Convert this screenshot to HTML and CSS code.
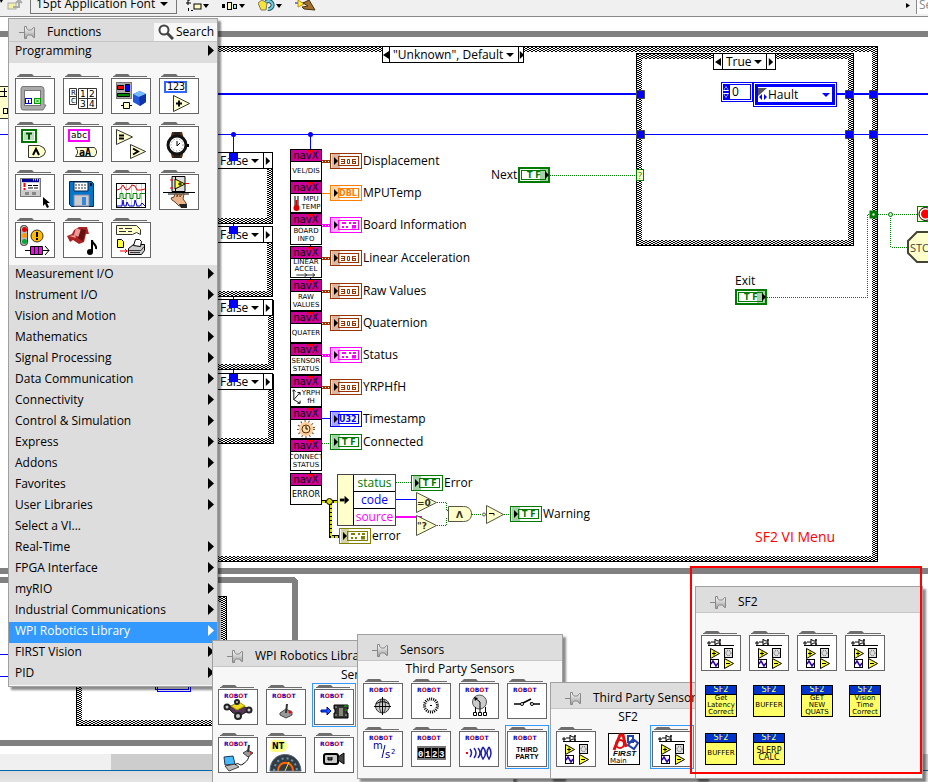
FILE: index.html
```html
<!DOCTYPE html>
<html lang="en">
<head>
<meta charset="utf-8">
<title>Block Diagram</title>
<link rel="stylesheet" href="styles.css">
</head>
<body>
<svg class="defs" aria-hidden="true">
  <defs>
    <pattern id="weave" width="4" height="2" patternUnits="userSpaceOnUse">
      <rect width="4" height="2" fill="#fff"/>
      <path d="M1 0h2v1h-2zM0 1h1v1h-1zM3 1h1v1h-1z" fill="#000"/>
    </pattern>
    <linearGradient id="metal" x1="0" y1="0" x2="0" y2="1"><stop offset="0" stop-color="#fff"/><stop offset="1" stop-color="#999"/></linearGradient>
  </defs>
  <symbol id="folder" viewBox="0 0 40 40"><path d="M3 2l2-2h12l2 2h17v1H2V2z" fill="#6e6e6e"/><rect x=".5" y="4.5" width="39" height="35" fill="#fff" stroke="#666"/></symbol>
  <symbol id="pin" viewBox="0 0 16 14"><path d="M0 7.500h6" stroke="#888"/><path d="M5.500 1.500l2 0 0 2 2 1.500h3l2-2.500h1v10h-1l-2-2.500h-3l-2 1.500v2h-2z" fill="url(#metal)" stroke="#888"/></symbol>
  <symbol id="right" viewBox="0 0 6 11"><path d="M0 0l6 5.500-6 5.500z" fill="currentColor"/></symbol>
  <symbol id="left" viewBox="0 0 6 8"><path d="M6 0v8L0 4z" fill="currentColor"/></symbol>
  <symbol id="down" viewBox="0 0 8 4"><path d="M0 0h8L4 4z" fill="currentColor"/></symbol>
  <symbol id="indicator" viewBox="0 0 32 16"><rect x=".5" y=".5" width="31" height="15" fill="#fff" stroke="currentColor"/><rect x="8.500" y="3.500" width="20" height="9" fill="none" stroke="currentColor"/><rect x="2" y="1" width="8" height="14" fill="currentColor" opacity=".35"/><path d="M4 4l4 4-4 4z"/></symbol>
  <symbol id="control" viewBox="0 0 32 16"><rect x="1" y="1" width="30" height="14" fill="#fff" stroke="currentColor" stroke-width="2"/><rect x="3.500" y="3.500" width="24" height="9" fill="none" stroke="currentColor"/><rect x="22" y="2" width="9" height="12" fill="currentColor" opacity=".35"/><path d="M27 4l4 4-4 4z"/></symbol>
  <symbol id="cluster" viewBox="0 0 32 16"><use href="#indicator"/><path d="M11 6.500h4M14.500 6v5M11 8.500h4M11 10.500h4M17.500 6.500h2v4h-2zM22 6.500h4M22.500 6v5M22 10.500h4M25.500 8v3M23 8.500h3" fill="none" stroke="currentColor"/></symbol>
  <symbol id="mixed" viewBox="0 0 32 16"><use href="#indicator"/><path d="M12 6h4M19 6h2M23 6h3M12 10h2M16 10h2M22 9h3v1.500h-3" fill="none" stroke="currentColor" stroke-width="2"/></symbol>
  <symbol id="tf" viewBox="0 0 32 16"><use href="#indicator"/><text x="12" y="11" class="px8" fill="currentColor">T F</text></symbol>
  <symbol id="tfc" viewBox="0 0 32 16"><use href="#control"/><text x="9" y="11" class="px8" fill="currentColor">T F</text></symbol>
  <symbol id="robot" viewBox="0 0 40 40"><use href="#folder"/><text x="6" y="13" class="px7" fill="#00c">R<tspan fill="#d00">O</tspan>B<tspan fill="#d00">O</tspan>T</text></symbol>
  <symbol id="vis" viewBox="0 0 40 40"><use href="#folder"/><path d="M7 11h2v2H7zM10 11h4M14 8v6M14 8.500l3 1.500h2v-2v6v-2h-2l-3 1.500M7 14.500h26" fill="none" stroke="#000"/><path d="M9.500 17.500v10l9-5zM23.500 27.500v10l9-5z" fill="#ff3" stroke="#000"/><path d="M11 22.500h4M13 20.500v4M25 32.500h4" stroke="#000"/><rect x="23.500" y="17.500" width="8" height="9" fill="#ddd" stroke="#000"/><circle cx="27.500" cy="22" r="2.500" fill="none" stroke="#555" stroke-dasharray="1 1"/><rect x="9.500" y="28.500" width="8" height="8" fill="#fff" stroke="#000"/><path d="M10 33l2-3 3 5 2-3" stroke="#30a" fill="none" stroke-width="1.500"/></symbol>
</svg>

<header class="toolbar">
  <svg class="tool-step" viewBox="0 0 24 16" aria-hidden="true"><path d="M0 0l3 0-2 3z"/><rect x="8" y="3" width="8" height="6" fill="#f5f0a8" stroke="#aaa"/><path d="M13 7h6V1m-3 2l3-3 3 3" fill="none" stroke="#aaa" stroke-width="2"/></svg>
  <label class="font-box"><select aria-label="Text settings"><option>15pt Application Font</option></select><svg class="caret" viewBox="0 0 8 4"><use href="#down"/></svg></label>
  <button class="tool" aria-label="Align objects"><svg viewBox="0 0 24 16"><path d="M2 0v5M0 3h5M2.500 8v3M5 10.500h2M2 0h2" stroke="#000"/><rect x="8" y="4" width="7" height="5" fill="#fffbc0" stroke="#000"/><path d="M17 4h6l-3 4z"/></svg></button>
  <button class="tool" aria-label="Distribute objects"><svg viewBox="0 0 24 16"><path d="M0 4h3v4H0z"/><rect x="5.500" y="2.500" width="4" height="7" fill="#fffbc0" stroke="#000"/><rect x="11.500" y="4.500" width="3" height="4" fill="#9ee" stroke="#000"/><path d="M17 4h6l-3 4z"/></svg></button>
  <button class="tool" aria-label="Reorder"><svg viewBox="0 0 24 16"><path d="M0 3l4-3 5 3-1 7-5 0z" fill="#f3e43c" stroke="#875"/><path d="M8 2a4 4 0 1 1 2 7" fill="none" stroke="#256" stroke-width="4"/><path d="M8 2a4 4 0 1 1 2 7" fill="none" stroke="#7cd" stroke-width="2"/><path d="M18 4h6l-3 4z"/></svg></button>
  <button class="tool" aria-label="Clean up diagram"><svg viewBox="0 0 24 16"><path d="M1 3h12" stroke="#00c"/><path d="M4 0v7l6-3z" fill="#ff3" stroke="#c80"/><path d="M9 3l6-3 6 10-11-1-2-2 6-1z" fill="#a6702c" stroke="#431"/></svg></button>
  <svg class="tool-end" viewBox="0 0 12 16" aria-hidden="true"><path d="M2 3v5l4-2.500z"/></svg>
  <input class="finder" type="text" value="Search" aria-label="Search diagram">
</header>

<main class="diagram">
  <svg class="wires" shape-rendering="crispEdges" aria-hidden="true">
    <g fill="#808080">
      <rect y="31" width="3000" height="6"/><rect y="568" width="3000" height="6"/><rect y="740" width="690" height="6"/>
      <path d="M0 577h294l4 4v160h-6V583H0z"/>
    </g>
    <g fill="none" stroke="url(#weave)" stroke-width="5">
      <rect x="60.500" y="49.500" width="814" height="509"/>
      <rect x="639.500" y="56.500" width="211" height="186"/>
      <rect x="200.500" y="158.500" width="69" height="62"/><rect x="200.500" y="230.500" width="69" height="63"/>
      <rect x="200.500" y="303.500" width="70" height="63"/><rect x="200.500" y="377.500" width="70" height="63"/>
      <rect x="79.500" y="599.500" width="144" height="123"/>
    </g>
    <g fill="none" stroke="#000">
      <rect x="57.500" y="46.500" width="820" height="515"/>
      <rect x="636.500" y="53.500" width="217" height="192"/>
      <rect x="197.500" y="155.500" width="75" height="68"/><rect x="197.500" y="227.500" width="75" height="69"/>
      <rect x="197.500" y="300.500" width="76" height="69"/><rect x="197.500" y="374.500" width="76" height="69"/>
      <rect x="76.500" y="596.500" width="150" height="129"/>
    </g>
    <rect x="-2" y="86.500" width="14" height="32" fill="#ffc" stroke="#333"/><path d="M0 91h7M0 96h7M4 88v9M3 108v5h4v-5z" fill="none" stroke="#000"/>
    <g fill="none" stroke="#00f">
      <path d="M0 134.500h3000M0 654.500h10M0 676.500h10M233.500 134v18M233.500 223v4M233.500 297v4M233.500 370v4M310.500 134v340M322 418.500h9M396 499.500h20"/>
      <path d="M218 94h418M836 94h2200" stroke-width="2"/>
      <rect x="155.500" y="680.500" width="33" height="9"/><rect x="157.500" y="682.500" width="33" height="9"/>
    </g>
    <g fill="none" stroke-width="3">
      <path d="M322 161.500h9M322 258.500h9M322 291.500h9M322 323.500h9M322 387.500h9" stroke="#930"/>
      <path d="M322 225.500h9M322 355.500h9" stroke="#f0f"/>
      <g stroke="#fff" stroke-width="1" stroke-dasharray="1 2"><path d="M322 161.500h9M322 258.500h9M322 291.500h9M322 323.500h9M322 387.500h9M322 225.500h9M322 355.500h9"/></g>
      <path d="M322 193.500h9" stroke="#ff8000" stroke-width="1"/>
      <path d="M322 501.500h15M330.500 501v35.500h9" stroke="#000"/><path d="M322 501.500h15M330.500 501v35.500h9" stroke="#dd0" stroke-width="2" stroke-dasharray="3 1"/>
      <path d="M396 516.500h26" stroke="#f0f" stroke-width="2"/><path d="M396 515.500h26" stroke="#fff" stroke-width="1" stroke-dasharray="1 3"/>
    </g>
    <g fill="none" stroke="#007a00" stroke-dasharray="1 1">
      <path d="M322 443.500h9M396 482.500h15M437 502.500h9.500v8h2M437 525.500h9.500v-7h2M472 514.500h10M504 514.500h6M550 175.500h86M767 297.500h100.500V214.500h50M890.500 214v33h17"/>
    </g>
  </svg>

  <!-- Case selectors -->
  <div class="selector s-main"><button aria-label="Previous case"><svg class="la"><use href="#left"/></svg></button><label><select aria-label="Main case"><option>"Unknown", Default</option></select><svg class="caret"><use href="#down"/></svg></label><button aria-label="Next case"><svg class="ra"><use href="#right"/></svg></button></div>
  <div class="selector s-true"><button aria-label="Previous case"><svg class="la"><use href="#left"/></svg></button><label><select aria-label="Inner case"><option>True</option></select><svg class="caret"><use href="#down"/></svg></label><button aria-label="Next case"><svg class="ra"><use href="#right"/></svg></button></div>
  <div class="selector false s-f1"><label><select aria-label="Case 1"><option>False</option></select><svg class="caret"><use href="#down"/></svg></label><button aria-label="Next case"><svg class="ra"><use href="#right"/></svg></button></div>
  <div class="selector false s-f2"><label><select aria-label="Case 2"><option>False</option></select><svg class="caret"><use href="#down"/></svg></label><button aria-label="Next case"><svg class="ra"><use href="#right"/></svg></button></div>
  <div class="selector false s-f3"><label><select aria-label="Case 3"><option>False</option></select><svg class="caret"><use href="#down"/></svg></label><button aria-label="Next case"><svg class="ra"><use href="#right"/></svg></button></div>
  <div class="selector false s-f4"><label><select aria-label="Case 4"><option>False</option></select><svg class="caret"><use href="#down"/></svg></label><button aria-label="Next case"><svg class="ra"><use href="#right"/></svg></button></div>

  <div class="enum-index"><svg viewBox="0 0 6 16"><path d="M0 0h6v16H0z" fill="#00f"/><path d="M0 7l3-5 3 5zM0 9h6l-3 5z" fill="#fff"/><path d="M1 6l2-3 2 3zM1 10h4l-2 3z" fill="#00f"/></svg><input type="text" value="0" aria-label="Index"></div>
  <label class="enum"><svg class="enum-corner" viewBox="0 0 10 14"><path d="M0 0h9L0 8z" fill="#555"/><path d="M4 6v6L1 9zM6 6v6l3-3z" fill="#00f"/></svg><select aria-label="State"><option>Hault</option></select><svg class="caret"><use href="#down"/></svg></label>

  <!-- navX property nodes -->
  <div class="navx n1"><b>navX</b><span>VEL/DIS</span></div>
  <div class="navx n2"><b>navX</b><span class="side"><svg viewBox="0 0 8 18"><path d="M4 2v10" stroke="#000" stroke-width="4"/><path d="M4 2v10" stroke="#fff" stroke-width="2"/><path d="M4 6v7" stroke="#d00" stroke-width="2"/><circle cx="4" cy="14" r="3" fill="#d00"/></svg><i>MPU<br>TEMP</i></span></div>
  <div class="navx n3"><b>navX</b><span>BOARD<br>INFO</span></div>
  <div class="navx n4"><b>navX</b><span class="tight">LINEAR<br>ACCEL<svg class="accel" viewBox="0 0 24 5"><path d="M0 2.500h23M10 0l3 2.500-3 2.500M20 0l3 2.500-3 2.500" fill="none" stroke="#000"/></svg></span></div>
  <div class="navx n5"><b>navX</b><span>RAW<br>VALUES</span></div>
  <div class="navx n6"><b>navX</b><span>QUATER</span></div>
  <div class="navx n7"><b>navX</b><span>SENSOR<br>STATUS</span></div>
  <div class="navx n8"><b>navX</b><span class="side"><svg viewBox="0 0 10 18"><path d="M2 1v11l7 4M2 12l7-8M0 3l2-2 2 2M6 4h3v3M6 16h3v-3" fill="none" stroke="#000"/></svg><i>YRPH<br>fH</i></span></div>
  <div class="navx n9"><b>navX</b><span><svg class="sun" viewBox="0 0 20 18"><circle cx="10" cy="9" r="7" fill="#fc9"/><circle cx="10" cy="9" r="8" fill="none" stroke="#642" stroke-width="2" stroke-dasharray="1 3"/><circle cx="10" cy="9" r="4" fill="#fda" stroke="#530"/><path d="M10 6v3h2" fill="none" stroke="#000"/></svg></span></div>
  <div class="navx n10"><b>navX</b><span>CONNECT<br>STATUS</span></div>
  <div class="navx n11"><b>navX</b><span class="lg">ERROR</span></div>

  <!-- Terminals -->
  <div class="term brown t1"><svg><use href="#cluster"/></svg>Displacement</div>
  <div class="term orange t2"><svg viewBox="0 0 32 16"><use href="#indicator"/><text x="9" y="11" class="px8" fill="currentColor">DBL</text></svg>MPUTemp</div>
  <div class="term pink t3"><svg><use href="#mixed"/></svg>Board Information</div>
  <div class="term brown t4"><svg><use href="#cluster"/></svg>Linear Acceleration</div>
  <div class="term brown t5"><svg><use href="#cluster"/></svg>Raw Values</div>
  <div class="term brown t6"><svg><use href="#cluster"/></svg>Quaternion</div>
  <div class="term pink t7"><svg><use href="#mixed"/></svg>Status</div>
  <div class="term brown t8"><svg><use href="#cluster"/></svg>YRPHfH</div>
  <div class="term blue t9"><svg viewBox="0 0 32 16"><use href="#indicator"/><text x="9" y="11" class="px8" fill="currentColor">U32</text></svg>Timestamp</div>
  <div class="term green t10"><svg><use href="#tf"/></svg>Connected</div>
  <div class="term green t-error"><svg><use href="#tf"/></svg>Error</div>
  <div class="term olive t-cluster"><svg><use href="#mixed"/></svg>error</div>
  <div class="term green t-warning"><svg><use href="#tf"/></svg>Warning</div>
  <div class="term green t-next">Next<svg><use href="#tfc"/></svg></div>
  <div class="term green t-exit">Exit<svg><use href="#tfc"/></svg></div>

  <div class="unbundle"><svg viewBox="0 0 16 50"><path d="M2 25h5" stroke="#000" stroke-width="3"/><path d="M7 20.500l5 4.500-5 4.500z"/></svg><ul><li class="c-green">status</li><li class="c-blue">code</li><li class="c-pink">source</li></ul></div>

  <p class="note">SF2 VI Menu</p>

  <svg class="wires over" aria-hidden="true">
    <g fill="#00f"><circle cx="233.500" cy="134.500" r="2.500"/><circle cx="310.500" cy="134.500" r="2.500"/>
      <path d="M229 153h9v8h-9zM229 226h9v8h-9zM229 300h9v8h-9zM229 374h9v8h-9z"/></g>
    <g fill="#00f" stroke="#444"><path d="M636.500 90.500h8v8h-8zM845.500 90.500h8v8h-8zM869.500 90.500h8v8h-8zM636.500 130.500h8v8h-8zM845.500 130.500h8v8h-8zM869.500 130.500h8v8h-8z"/></g>
    <path d="M307 150h7l-3.500 4zM307 182h7l-3.500 3zM307 214h7l-3.500 3zM307 247h7l-3.500 3zM307 280h7l-3.500 3zM307 312h7l-3.500 3zM307 344h7l-3.500 3zM307 376h7l-3.500 3zM307 408h7l-3.500 3zM307 440h7l-3.500 3zM307 474h7l-3.500 3z" fill="red"/>
    <rect x="636.500" y="169.500" width="7" height="11" fill="#ffc" stroke="#007a00"/><text x="638" y="179" font-size="9" fill="#007a00">?</text>
    <rect x="871" y="212" width="5" height="5" fill="#fff" stroke="#007a00" stroke-width="3"/><circle cx="890.500" cy="214.500" r="2" fill="#cfc" stroke="#007a00"/>
    <rect x="917.500" y="206.500" width="16" height="15" fill="#ffc" stroke="#007a00"/><circle cx="925.500" cy="214" r="6.500" fill="#fff" stroke="#000"/><circle cx="925.500" cy="214" r="4.500" fill="red"/>
    <path d="M917 232h18l9 9v12l-9 9h-18l-9-9v-12z" fill="#ffc" stroke="#444433" stroke-width="2"/><text x="910" y="252" class="stop">STOP</text>
    <circle cx="329.500" cy="501.500" r="3" fill="#dd0" stroke="#000"/>
    <g fill="#ffc" stroke="#554"><path d="M416.500 492.500v20l20-10zM416.500 515.500v20l20-10zM448.500 506.500h15c5 0 8 3 8 7.500s-3 7.500-8 7.500h-15zM486.500 505.500v18l17-9z"/><circle cx="484" cy="514.500" r="1.500"/></g>
    <g class="px9"><text x="417" y="506">=0</text><text x="417" y="529" >"?</text><text x="456" y="518">Λ</text></g>
    <path d="M489 513.500h5v2" fill="none" stroke="#000"/>
  </svg>
</main>

<footer class="bottom"><div class="scroll"><div class="thumb"></div></div></footer>

<!-- Functions palette -->
<nav class="palette functions" aria-label="Functions">
  <div class="head"><svg class="pin"><use href="#pin"/></svg><h2>Functions</h2><button class="search"><svg viewBox="0 0 16 16"><circle cx="6" cy="6" r="4.500" fill="#fff" stroke="#444" stroke-width="2"/><path d="M9.500 9.500l5.500 5.500" stroke="#444" stroke-width="3"/></svg>Search</button></div>
  <button class="row">Programming<svg><use href="#right"/></svg></button>
  <div class="grid">
    <button class="tile" aria-label="Structures"><svg viewBox="0 0 40 40"><use href="#folder"/><path d="M8 12.500h18q3 0 3 3V31h2l-3 5H8q-2 0-2-3V15q0-2.500 2-2.500z" fill="#aaa" stroke="#777"/><rect x="9.500" y="16.500" width="16" height="15" fill="#fff" stroke="#777"/><rect x="10.500" y="24.500" width="6" height="5" fill="#fff" stroke="#00c"/><path d="M13.500 26v3" stroke="#00c"/><rect x="19.500" y="24.500" width="6" height="5" fill="#cfc" stroke="#090"/><path d="M21 25.500l3 3m0-3l-3 3" stroke="#090"/></svg></button>
    <button class="tile" aria-label="Array"><svg viewBox="0 0 40 40"><use href="#folder"/><path d="M6.500 14.500h7v16h-7zM6.500 22.500h7M15.500 14.500h18v20h-18zM24.500 14.500v20M15.500 24.500h18" fill="#fff" stroke="#333"/><g class="num"><text x="17" y="23">1</text><text x="26" y="23">2</text><text x="17" y="33">3</text><text x="26" y="33">4</text></g><g class="num-sm"><text x="8" y="21">R</text><text x="8" y="29">C</text></g></svg></button>
    <button class="tile" aria-label="Cluster, Class, and Variant"><svg viewBox="0 0 40 40"><use href="#folder"/><rect x="5.500" y="8.500" width="15" height="16" fill="#aaa" stroke="#777"/><path d="M6.500 11.500h6v4h-6z" fill="red" stroke="#000"/><path d="M14.500 10.500h4v7h-4z" fill="#00f" stroke="#000"/><path d="M6.500 19.500h12v3h-12z" fill="#080" stroke="#000"/><path d="M22 20l7-3 6 3v8l-6 4-7-4z" fill="#25d"/><path d="M22 20l7-3 6 3-7 3z" fill="#7bf"/><path d="M28 23l7-3v8l-6 4z" fill="#13a"/><path d="M12.500 28.500h6v6h-6zM10 31.500h2M19 31.500h2" fill="#ffc" stroke="#000"/></svg></button>
    <button class="tile" aria-label="Numeric"><svg viewBox="0 0 40 40"><use href="#folder"/><rect x="6" y="8" width="21" height="10" fill="#fff" stroke="#36f" stroke-width="2"/><text x="8" y="16" class="mono9">123</text><path d="M14.500 21.500v16l16-8z" fill="#ffc" stroke="#333"/><path d="M17 29.500h6M20 26.500v6" stroke="#000" stroke-width="2"/></svg></button>
    <button class="tile" aria-label="Boolean"><svg viewBox="0 0 40 40"><use href="#folder"/><rect x="6" y="7" width="16" height="14" fill="#070"/><rect x="8.500" y="9.500" width="11" height="9" fill="#bdb" stroke="#fff"/><path d="M11 11.500h6M14 11.500v6" stroke="#050" stroke-width="2"/><path d="M13.500 23.500h11q6 2 6 6t-6 6h-11z" fill="#ffc" stroke="#333"/><path d="M18 33l3-6 3 6" fill="none" stroke="#000" stroke-width="2"/></svg></button>
    <button class="tile" aria-label="String"><svg viewBox="0 0 40 40"><use href="#folder"/><rect x="6" y="8" width="20" height="11" fill="#fff" stroke="#f0f" stroke-width="2"/><text x="8" y="16" class="mono8">abc</text><path d="M12.500 25.500h19l2 3v3l-2 3h-19l2-3v-3z" fill="#ffc" stroke="#333"/><text x="16" y="34" class="mono10">aA</text></svg></button>
    <button class="tile" aria-label="Comparison"><svg viewBox="0 0 40 40"><use href="#folder"/><path d="M5.500 7.500v15l16-7.500zM19.500 22.500v14l15-7z" fill="#ffc" stroke="#333"/><path d="M8 13.500h5M8 16.500h5" stroke="#000" stroke-width="2"/><path d="M22 26.500l5 3-5 3" fill="none" stroke="#000" stroke-width="2"/></svg></button>
    <button class="tile" aria-label="Timing"><svg viewBox="0 0 40 40"><use href="#folder"/><path d="M13 10h10l2 7H11zM11 28h14l-2 8H13z" fill="#532a12"/><path d="M15 10h6v26h-6z" fill="#222"/><circle cx="18" cy="23" r="9" fill="#fff" stroke="#111" stroke-width="3"/><circle cx="18" cy="23" r="6" fill="none" stroke="#777" stroke-dasharray="1 2"/><path d="M18 24v-5M18 24l3-3" stroke="#000"/><path d="M28 22h2v3h-2z"/></svg></button>
    <button class="tile" aria-label="Dialog and User Interface"><svg viewBox="0 0 40 40"><use href="#folder"/><rect x="5.500" y="8.500" width="20" height="18" fill="#ccc" stroke="#777"/><path d="M7 9h17v3H7z" fill="#009"/><path d="M18 9.500h6" stroke="#ddd" stroke-dasharray="1 1" stroke-width="2"/><path d="M7 13h17v7H7z" fill="#fff"/><path d="M9.500 13v4M9.500 18v2" stroke="red" stroke-width="2"/><path d="M13 15.500h4M18 15.500h5M13 18h5M19 18h4" stroke="#000"/><path d="M10 22h4v3h-4zM17 22h4v3h-4z" fill="#888"/><path d="M28 27v9l2-2 2 4 2-1-2-4h3z"/></svg></button>
    <button class="tile" aria-label="File I/O"><svg viewBox="0 0 40 40"><use href="#folder"/><path d="M6.500 11.500h22l2 2v23h-22l-2-2z" fill="#07c" stroke="#024"/><path d="M11 12h14v9H11z" fill="#fff" stroke="#024"/><path d="M12 15h12M12 18h12" stroke="#333" stroke-dasharray="2 1"/><path d="M11 25h15v11H11z" fill="#ccc" stroke="#88a"/><path d="M19 27h4v8h-4z" fill="#38d"/><path d="M27 13h2v3h-2z" fill="#013"/></svg></button>
    <button class="tile" aria-label="Waveform"><svg viewBox="0 0 40 40"><use href="#folder"/><rect x="5.500" y="13.500" width="29" height="24" fill="#fff" stroke="#000" stroke-width="1"/><path d="M10.500 14v23M15.500 14v23M20.500 14v23M25.500 14v23M30.500 14v23" stroke="#ccc"/><path d="M6 20l3-1 3-4 3 5 3-1 3-4 3 1 2 4 4 0 4-1" fill="none" stroke="#e00"/><path d="M6 28.500h3v-5h3v5h3v-5h4v5h3v-5h4v5h3v-5h5" fill="none" stroke="#080"/><path d="M6 36h5l1-6 1 6h2l1-4 2 4h5l1-6 2 6h3l2-3 3 3" fill="none" stroke="#00d"/></svg></button>
    <button class="tile" aria-label="Application Control"><svg viewBox="0 0 40 40"><use href="#folder"/><path d="M13 6.500h13v15H13zM16.500 6.500v15" fill="#ddd" stroke="#000"/><path d="M16 9v10l10-5z" fill="#ff3" stroke="#000"/><path d="M19 14h4M21 12v4M4 22.500h32M9 24h21" stroke="#000"/><path d="M11 10h3M11 18h3M26 13.500h4" stroke="#e00"/><path d="M12 28l3-1 1-3h2v3l1-3h2v3l2-3h2l-1 5 3 4v3h-7l-4-4-3-2z" fill="#ebb48c" stroke="#642"/><path d="M20 34h8v4h-6z" fill="#222"/></svg></button>
    <button class="tile" aria-label="Synchronization"><svg viewBox="0 0 40 40"><use href="#folder"/><rect x="5.500" y="7.500" width="7" height="20" rx="3" fill="#bbb" stroke="#333"/><circle cx="9.500" cy="11.500" r="2.500" fill="#d00"/><circle cx="9.500" cy="17.500" r="2.500" fill="#f90"/><circle cx="9.500" cy="23.500" r="2.500" fill="#0a3"/><circle cx="22" cy="18" r="6" fill="#fb0" stroke="#333"/><path d="M22 14v5M22 20v2" stroke="#000" stroke-width="2"/><path d="M10 32.500h24M30 28l4 4.500-4 4.500" fill="none" stroke="#000"/><path d="M15.500 28.500h12v8h-12zM19.500 28.500v8M23.500 28.500v8" fill="#f0f" stroke="#000"/></svg></button>
    <button class="tile" aria-label="Graphics and Sound"><svg viewBox="0 0 40 40"><use href="#folder"/><path d="M4 18l5-2 2-4 5-3 8 0 2 7-3 0-2 8-5 2-6-4-3 2z" fill="#a22"/><path d="M13 10l5 2-2 7-5-2zM6 18l6-1 1 3z" fill="#e99"/><path d="M18 11l5 1-3 11-5-3z" fill="#611"/><path d="M29 22v12M29 22c0 4 5 4 4 9" fill="none" stroke="#000" stroke-width="2"/><circle cx="27" cy="34" r="3"/></svg></button>
    <button class="tile" aria-label="Report Generation"><svg viewBox="0 0 40 40"><use href="#folder"/><path d="M5.500 7.500h20l4 4v5l-4-2-4 2h-16z" fill="#ffc" stroke="#333"/><path d="M8 10.500h4M14 10.500h7M8 13.500h7M17 13.500h4" stroke="#333"/><path d="M6.500 21.500h4l2 2v6h-6z" fill="#ff3" stroke="#000"/><path d="M9 33h6M14 31l2 2-2 2" stroke="red" fill="none"/><path d="M17.500 30.500l5-4h11v6l-3 4h-13z" fill="#ccc" stroke="#000"/><path d="M22.500 27.500l2-6h4l2 2-1 5z" fill="#fff" stroke="#000"/><path d="M18 32.500h12l3-4M19 34.500h10" stroke="#333" fill="none"/></svg></button>
  </div>
  <div class="rows">
    <button class="row">Measurement I/O<svg><use href="#right"/></svg></button>
    <button class="row">Instrument I/O<svg><use href="#right"/></svg></button>
    <button class="row">Vision and Motion<svg><use href="#right"/></svg></button>
    <button class="row">Mathematics<svg><use href="#right"/></svg></button>
    <button class="row">Signal Processing<svg><use href="#right"/></svg></button>
    <button class="row">Data Communication<svg><use href="#right"/></svg></button>
    <button class="row">Connectivity<svg><use href="#right"/></svg></button>
    <button class="row">Control &amp; Simulation<svg><use href="#right"/></svg></button>
    <button class="row">Express<svg><use href="#right"/></svg></button>
    <button class="row">Addons<svg><use href="#right"/></svg></button>
    <button class="row">Favorites<svg><use href="#right"/></svg></button>
    <button class="row">User Libraries<svg><use href="#right"/></svg></button>
    <button class="row">Select a VI...</button>
    <button class="row">Real-Time<svg><use href="#right"/></svg></button>
    <button class="row">FPGA Interface<svg><use href="#right"/></svg></button>
    <button class="row">myRIO<svg><use href="#right"/></svg></button>
    <button class="row">Industrial Communications<svg><use href="#right"/></svg></button>
    <button class="row active">WPI Robotics Library<svg><use href="#right"/></svg></button>
    <button class="row">FIRST Vision<svg><use href="#right"/></svg></button>
    <button class="row">PID<svg><use href="#right"/></svg></button>
  </div>
</nav>

<nav class="palette wpi" aria-label="WPI Robotics Library">
  <div class="head"><svg class="pin"><use href="#pin"/></svg><h2>WPI Robotics Library</h2></div>
  <p class="sub">Sensors</p>
  <div class="grid">
    <button class="tile" aria-label="Robot Drive"><svg viewBox="0 0 40 40"><use href="#robot"/><path d="M9 22l10-3 8 3 5 3-9 5-8-2z" fill="#535" stroke="#222"/><path d="M13 21l8-4 6 4-8 4z" fill="#ed2" stroke="#a90"/><g fill="#ccc" stroke="#222" stroke-width="2"><circle cx="19" cy="17" r="2"/><circle cx="9" cy="22" r="2.500"/><circle cx="31" cy="25" r="2.500"/><circle cx="20" cy="31" r="3"/></g></svg></button>
    <button class="tile" aria-label="Joystick"><svg viewBox="0 0 40 40"><use href="#robot"/><path d="M14 28l6-4 6 3v3l-6 3-6-3z" fill="#999" stroke="#444"/><path d="M20 28l1-9" stroke="#333" stroke-width="2"/><circle cx="24" cy="27" r="1.500" fill="red"/></svg></button>
    <button class="tile selected" aria-label="Sensors"><svg viewBox="0 0 40 40"><use href="#robot"/><path d="M7 25h6v-3l4 4-4 4v-3H7z" fill="#06f" stroke="#00a"/><path d="M20 20h14v4h-1v4h1v5H20v-5h1v-4h-1z" fill="#333" stroke="#000"/><path d="M25 23h4v8h-4z" fill="#887"/><path d="M21 22h2M21 30h2M31 30h2" stroke="#aaa"/><path d="M30 21h4M31 25h3" stroke="#0c0"/></svg></button>
    <button class="tile" aria-label="Driver Station"><svg viewBox="0 0 40 40"><use href="#robot"/><path d="M6 24l9-1 2 8-10 1z" fill="#4bf" stroke="#235"/><path d="M7 33l10-2 4 3-10 4z" fill="#bbb" stroke="#444"/><path d="M17 32c4-4 4 2 8-1s5-4 6-8" fill="none" stroke="#000"/><path d="M25 20l5-3 5 3-5 4z" fill="#999" stroke="#444"/><path d="M30 19l1-7" stroke="#333" stroke-width="2"/><circle cx="33" cy="20" r="1" fill="red"/></svg></button>
    <button class="tile" aria-label="Network Tables"><svg viewBox="0 0 40 40"><use href="#folder"/><path d="M4 38c0-22 30-22 31 0z" fill="#333b44" stroke="#567"/><path d="M8 38c1-17 22-17 23 0" fill="none" stroke="#69a" stroke-width="2" stroke-dasharray="2 3"/><path d="M12 38c0-11 15-11 15 0" fill="none" stroke="#f60" stroke-width="2"/><path d="M19 38l4-9" stroke="#fd4"/><path d="M5 7h10q6 0 6 6t-6 6h-8q-3 0-3-3z" fill="#ff8"/><text x="6" y="16" class="px8">NT</text></svg></button>
    <button class="tile" aria-label="Camera"><svg viewBox="0 0 40 40"><use href="#robot"/><rect x="10" y="21" width="14" height="10" rx="2" fill="#ccc" stroke="#000" stroke-width="2"/><path d="M14 24v3h4v-3M24 24l6-4v11l-6-4z" fill="#444" stroke="#000"/></svg></button>
  </div>
</nav>

<nav class="palette sensors" aria-label="Sensors">
  <div class="head"><svg class="pin"><use href="#pin"/></svg><h2>Sensors</h2></div>
  <p class="sub">Third Party Sensors</p>
  <div class="grid">
    <button class="tile" aria-label="Gyro"><svg viewBox="0 0 40 40"><use href="#robot"/><circle cx="19.500" cy="27" r="7" fill="#ccc" stroke="#333"/><ellipse cx="19.500" cy="27" rx="3" ry="7" fill="none" stroke="#444"/><path d="M11 27.500h17M19.500 18v18M13 25c4-3 9-3 13 0" fill="none" stroke="#000"/></svg></button>
    <button class="tile" aria-label="Encoder"><svg viewBox="0 0 40 40"><use href="#robot"/><circle cx="20" cy="26.500" r="6.500" fill="#fff" stroke="#000" stroke-width="3" stroke-dasharray="1 1"/><path d="M19 26h2v1h-2z"/></svg></button>
    <button class="tile" aria-label="Potentiometer"><svg viewBox="0 0 40 40"><use href="#robot"/><circle cx="20.500" cy="23" r="7" fill="#ccc" stroke="#555"/><path d="M21 33V23l-5-4M16.500 34v-6M26.500 34v-6" fill="none" stroke="#000"/><path d="M15 18l4 1-3 3z"/><path d="M14.500 33.500h3v3h-3zM19.500 33.500h3v3h-3zM24.500 33.500h3v3h-3z" fill="#fff" stroke="#000"/></svg></button>
    <button class="tile" aria-label="Digital Input"><svg viewBox="0 0 40 40"><use href="#robot"/><path d="M7 25h7M16 24l8-4M23 24l3 1h7" fill="none" stroke="#000" stroke-width="1.500"/><circle cx="15" cy="25" r="1.500" fill="#fff" stroke="#000"/><circle cx="25" cy="25" r="1.500" fill="#fff" stroke="#000"/></svg></button>
    <button class="tile" aria-label="Accelerometer"><svg viewBox="0 0 40 40"><use href="#robot"/><g class="unit"><text x="10" y="22">m</text><text x="22" y="31">s</text><text x="28" y="27" class="sup">2</text></g><path d="M22 18l-3 13" stroke="#009"/></svg></button>
    <button class="tile" aria-label="Counter"><svg viewBox="0 0 40 40"><use href="#robot"/><rect x="6" y="19" width="29" height="14" fill="#777"/><path d="M7 21h6v10H7zM14 21h6v10h-6zM21 21h6v10h-6zM28 21h6v10h-6z"/><g class="count"><text x="7" y="30">0</text><text x="14" y="30">1</text><text x="21" y="30">2</text><text x="28" y="30">3</text></g></svg></button>
    <button class="tile" aria-label="Ultrasonic"><svg viewBox="0 0 40 40"><use href="#robot"/><path d="M7 25h2v2H7z" fill="red"/><path d="M11 22q3 4 0 8M15 21q4 5 0 10M19 21q4 5 0 10M24 20q-4 6 0 12q5-6 0-12M30 20q-4 6 0 12q4-6 0-12" fill="none" stroke="#22a" stroke-width="1.500"/></svg></button>
    <button class="tile selected" aria-label="Third Party"><svg viewBox="0 0 40 40"><use href="#robot"/><g class="px7n"><text x="20" y="25">THIRD</text><text x="20" y="32">PARTY</text></g></svg></button>
  </div>
</nav>

<nav class="palette third" aria-label="Third Party Sensors">
  <div class="head"><svg class="pin"><use href="#pin"/></svg><h2>Third Party Sensors</h2></div>
  <p class="sub">SF2</p>
  <div class="grid">
    <button class="tile" aria-label="navX"><svg viewBox="0 0 40 40"><use href="#vis"/></svg></button>
    <button class="tile" aria-label="FIRST Main"><svg viewBox="0 0 40 40"><rect x="4.500" y="6.500" width="31" height="31" fill="#fff" stroke="#000"/><path d="M10 23l6-15h3l3 12" fill="none" stroke="#d11" stroke-width="3"/><circle cx="16" cy="17" r="4" fill="none" stroke="#d11" stroke-width="2"/><path d="M24 9h5v6h-5zM29 12l5 4-4 6-6-4z" fill="none" stroke="#24a" stroke-width="2"/><text x="9" y="29" class="first">FIRST</text><text x="6" y="36" class="num-sm">Main</text></svg></button>
    <button class="tile selected" aria-label="SF2"><svg viewBox="0 0 40 40"><use href="#vis"/></svg></button>
  </div>
</nav>

<nav class="palette sf2" aria-label="SF2">
  <div class="head"><svg class="pin"><use href="#pin"/></svg><h2>SF2</h2></div>
  <p class="sub"></p>
  <div class="grid">
    <button class="tile" aria-label="Folder 1"><svg viewBox="0 0 40 40"><use href="#vis"/></svg></button>
    <button class="tile" aria-label="Folder 2"><svg viewBox="0 0 40 40"><use href="#vis"/></svg></button>
    <button class="tile" aria-label="Folder 3"><svg viewBox="0 0 40 40"><use href="#vis"/></svg></button>
    <button class="tile" aria-label="Folder 4"><svg viewBox="0 0 40 40"><use href="#vis"/></svg></button>
    <button class="tile vi"><b>SF2</b><span>Get<br>Latency<br>Correct</span></button>
    <button class="tile vi"><b>SF2</b><span>BUFFER</span></button>
    <button class="tile vi"><b>SF2</b><span>GET<br>NEW<br>QUATS</span></button>
    <button class="tile vi"><b>SF2</b><span>Vision<br>Time<br>Correct</span></button>
    <button class="tile vi"><b>SF2</b><span>BUFFER</span></button>
    <button class="tile vi"><b>SF2</b><span class="big">SLERP<br>CALC</span></button>
  </div>
</nav>
<div class="highlight"></div>
</body>
</html>
```
FILE: styles.css
```css
* { box-sizing: border-box; }
html, body { height: 100%; }
body {
  margin: 0; display: flex; flex-direction: column; position: relative; overflow: hidden;
  background: #fff; color: #000; font: 12px/16px "Open Sans", "Noto Sans", sans-serif;
}
button, select, input { font: inherit; color: inherit; border: 0; padding: 0; margin: 0; background: none; border-radius: 0; }
select { appearance: none; outline: 0; }
h2, p, ul { margin: 0; padding: 0; font-size: 12px; font-weight: 400; }
svg { display: block; flex: none; overflow: hidden; }
.defs { position: absolute; width: 0; height: 0; }
.caret { width: 8px; height: 4px; }

.px7 { font: bold 6px "DejaVu Sans", sans-serif; }
.px7n { font: bold 7px "Liberation Sans", sans-serif; text-anchor: middle; }
.px8 { font: bold 8px "DejaVu Sans", sans-serif; }
.px9 { font: bold 9px "DejaVu Sans", sans-serif; fill: #332; }
.num { font: 9px "DejaVu Sans", sans-serif; }
.num-sm { font: 7px "DejaVu Sans", sans-serif; }
.mono8 { font: 9px "DejaVu Sans Mono", monospace; }
.mono9 { font: 10px "DejaVu Sans Mono", monospace; }
.mono10 { font: bold 10px "DejaVu Sans Mono", monospace; }
.count { font: bold 9px "Liberation Mono", monospace; fill: #fff; }
.unit { font: 10px "DejaVu Sans", sans-serif; fill: #009; }
.sup { font-size: 7px; }
.first { font: italic bold 8px "Liberation Sans", sans-serif; }
.stop { font: 11px "Open Sans", sans-serif; fill: #443; }

/* Toolbar */
.toolbar {
  position: relative; z-index: 1; height: 17px; flex: none; display: flex; align-items: flex-end; overflow: hidden;
  background: #f0f0f0; border-bottom: 1px solid #888;
}
.tool-step { width: 24px; height: 16px; margin-right: 6px; }
.font-box { display: flex; align-items: center; width: 147px; height: 20px; margin-bottom: 2px; padding: 0 8px 0 5px; border: 1px solid #777; background: #f0f0f0; }
.font-box select { flex: 1; height: 18px; }
.tool { margin-left: 12px; }
.font-box + .tool { margin-left: 9px; }
.tool svg { width: 24px; height: 16px; }
.tool-end { width: 12px; height: 16px; margin-left: auto; }
.finder { width: 12px; height: 20px; padding-left: 2px; margin-bottom: 2px; border-left: 1px solid #888; background: #fff; color: #888; }

/* Diagram */
.diagram { flex: 1; }
.wires { position: absolute; left: 0; top: 0; width: 100%; height: 100%; pointer-events: none; }
.selector { position: absolute; display: flex; height: 17px; border: 1px solid #000; background: #fff; }
.selector button { width: 8px; display: grid; place-items: center; }
.selector label { flex: 1; display: flex; align-items: center; gap: 2px; padding: 0 4px 0 3px; border: solid #000; border-width: 0 1px; }
.selector select { flex: 1; min-width: 0; height: 15px; line-height: 15px; }
.la, .ra { width: 6px; height: 8px; }
.s-main { left: 382px; top: 46px; width: 142px; }
.s-true { left: 713px; top: 53px; width: 63px; }
.false { left: 200px; width: 73px; }
.false label { padding-left: 18px; }
.s-f1 { top: 152px; } .s-f2 { top: 226px; } .s-f3 { top: 299px; } .s-f4 { top: 373px; }

.enum-index { position: absolute; left: 721px; top: 82px; width: 32px; height: 20px; padding: 1px; border: 1px solid #00f; background: #fff; display: flex; }
.enum-index svg { width: 6px; height: 16px; }
.enum-index input { flex: 1; min-width: 0; padding: 0 2px; border: 1px solid #00f; }
.enum { position: absolute; left: 753px; top: 82px; width: 84px; height: 25px; border: 1px solid #00f; outline: 3px solid #00f; outline-offset: -5px; background: #fff; display: flex; align-items: center; padding: 0 6px 0 4px; color: #00f; }
.enum-corner { width: 10px; height: 16px; }
.enum select { flex: 1; min-width: 0; color: #000; }

.navx { position: absolute; left: 290px; width: 32px; height: 32px; border: 1px solid #000; background: #fff; display: flex; flex-direction: column; overflow: hidden; }
.navx b { height: 12px; flex: none; background: #c09; border-bottom: 1px solid #000; font: 10px/12px "DejaVu Sans", sans-serif; text-align: center; }
.navx span { flex: 1; display: flex; flex-direction: column; align-items: center; justify-content: center; font: 7px/8px "DejaVu Sans", sans-serif; text-align: center; }
.navx .tight { line-height: 7px; }
.navx .side { flex-direction: row; gap: 1px; }
.navx .side svg { width: 9px; height: 18px; }
.navx i { font-style: normal; }
.navx .accel { width: 24px; height: 4px; }
.navx .sun { width: 20px; height: 18px; }
.navx .lg { font-size: 8px; }
.n1 { top: 149px; } .n2 { top: 181px; } .n3 { top: 213px; } .n4 { top: 246px; } .n5 { top: 279px; } .n6 { top: 311px; }
.n7 { top: 343px; } .n8 { top: 375px; } .n9 { top: 407px; } .n10 { top: 439px; } .n11 { top: 473px; }

.term { position: absolute; left: 330px; height: 16px; display: flex; align-items: center; gap: 1px; white-space: nowrap; }
.term svg { width: 32px; height: 16px; }
.brown svg { color: #930; } .orange svg { color: #ff8000; } .pink svg { color: #f0f; } .blue svg { color: #00f; }
.green svg { color: #007a00; } .olive svg { color: #808000; }
.t1 { top: 153px; } .t2 { top: 185px; } .t3 { top: 217px; } .t4 { top: 250px; } .t5 { top: 283px; } .t6 { top: 315px; }
.t7 { top: 347px; } .t8 { top: 379px; } .t9 { top: 411px; } .t10 { top: 434px; }
.t-error { left: 411px; top: 475px; }
.t-cluster { left: 339px; top: 528px; }
.t-warning { left: 510px; top: 506px; }
.t-next { left: 491px; top: 167px; }
.t-exit { left: 735px; top: 273px; height: 32px; flex-direction: column; align-items: flex-start; gap: 0; }

.unbundle { position: absolute; left: 337px; top: 474px; width: 59px; height: 52px; display: flex; border: 1px solid #444; background: #ffc; }
.unbundle svg { width: 15px; height: 50px; }
.unbundle ul { flex: 1; list-style: none; background: #fff; border-left: 1px solid #000; text-align: center; }
.unbundle li { height: 17px; line-height: 16px; border-bottom: 1px solid #000; }
.unbundle li:last-child { border: 0; }
.c-green { color: #007a00; } .c-blue { color: #00f; } .c-pink { color: #f0f; }
.note { position: absolute; left: 755px; top: 527px; font-size: 14px; line-height: 20px; color: #f00; white-space: nowrap; }

/* Bottom scroll bar */
.bottom { position: relative; flex: none; height: 28px; background: linear-gradient(#ccc, #e4e4e4); }
.scroll { height: 17px; background: #f0f0f0; border-bottom: 1px solid #06a; }
.thumb { height: 16px; margin-left: 12%; background: #cdcdcd; }

/* Palettes */
.palette { position: absolute; background: #f7f7f7; border: 1px solid #a0a0a0; box-shadow: 3px 3px 2px rgba(0, 0, 0, .45); }
.head { display: flex; align-items: center; height: 26px; padding-left: 14px; gap: 12px; background: #ddd; border-bottom: 1px solid #c6c6c6; white-space: nowrap; overflow: hidden; }
.head h2 { padding-top: 4px; }
.pin { width: 16px; height: 14px; margin-top: 4px; }
.sub { height: 18px; line-height: 16px; text-align: center; }
.grid { display: grid; grid-template-columns: repeat(auto-fill, 40px); gap: 8px; padding: 0 5px; }
.tile { position: relative; width: 40px; height: 40px; }
.tile svg { width: 40px; height: 40px; }
.selected { outline: 1px solid #39f; outline-offset: 1px; }
.row { display: flex; width: 100%; height: 21px; align-items: center; justify-content: space-between; padding: 0 3px 4px 6px; background: #ddd; text-align: left; }
.row svg { width: 6px; height: 11px; }
.active { background: #39f; color: #fff; }

.functions { left: 8px; top: 18px; width: 210px; z-index: 2; padding-bottom: 1px; }
.functions .head { height: 23px; padding-left: 10px; }
.functions .head h2 { padding-top: 3px; }
.functions .pin { margin-top: 3px; }
.functions .search { display: flex; align-items: center; gap: 2px; align-self: flex-end; height: 18px; width: 63px; margin-left: auto; padding-left: 4px; background: #f7f7f7; }
.search svg { width: 16px; height: 16px; }
.functions .grid { padding: 11px 6px 7px; }
.wpi { left: 212px; top: 640px; width: 302px; height: 150px; z-index: 3; }
.wpi .grid { grid-template-columns: repeat(3, 40px); }
.sensors { left: 357px; top: 634px; width: 206px; z-index: 4; padding-bottom: 11px; }
.third { left: 550px; top: 682px; width: 156px; z-index: 5; padding-bottom: 11px; }
.sf2 { left: 695px; top: 586px; width: 228px; z-index: 6; padding-bottom: 11px; }

.vi { display: flex; flex-direction: column; width: 32px; height: 32px; margin: 6px 4px 2px; border: 1px solid #000; background: #ff6; overflow: hidden; }
.vi b { height: 9px; flex: none; background: #03c; color: #ff6; border-bottom: 1px solid #000; font: 8px/8px "DejaVu Sans", sans-serif; }
.vi span { flex: 1; display: grid; place-content: center; text-align: center; font: 7px/7px "DejaVu Sans", sans-serif; }
.vi .big { font-size: 8px; }
.highlight { position: absolute; z-index: 7; left: 690px; top: 566px; width: 232px; height: 208px; border: 2px solid red; pointer-events: none; }
```
